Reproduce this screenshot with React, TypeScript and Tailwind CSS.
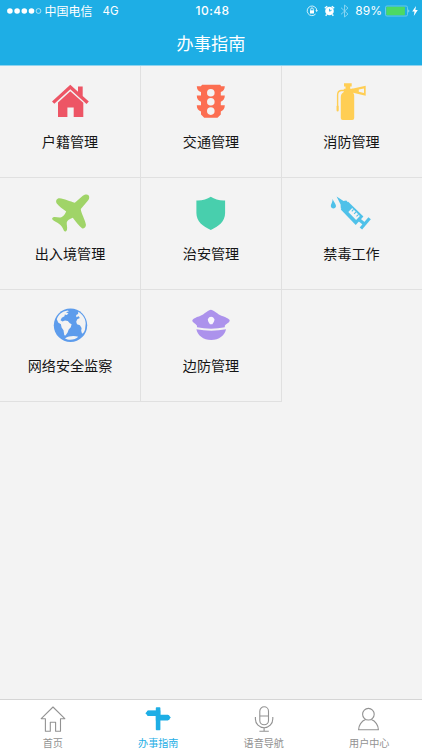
import type { ReactNode } from "react";

type Service = { name: string; icon: ReactNode };
type Tab = { name: string; icon: ReactNode; active?: boolean };

const services: Service[] = [
  {
    name: "户籍管理",
    icon: (
      <g fill="#ed5565">
        <path d="M20.3 3.8 28 10.8V5.5h4.7v9.6l6.1 5.5-2.3 2.3L20.3 8.3 4.3 22.8 2 20.5Z" />
        <path d="M20.3 10.2 33.3 21.8V36H23.7v-9.5h-6.3V36H8V21.6Z" />
      </g>
    ),
  },
  {
    name: "交通管理",
    icon: (
      <>
        <path
          fill="#fc6e51"
          d="M11 3.7H29.2L30.2 5.2H33.8C33.8 8.3 32.3 10 29.8 11V14.5H33.8C33.8 17.8 32.3 19.8 29.8 20.8V24.2H33.8C33.8 27.5 32.3 29.5 29.8 30.4V33.5L26.5 36.7H13.2L10 33.5V30.4C7.2 29.5 5.8 27.5 5.8 24.2H10V20.8C7.2 19.8 5.8 17.8 5.8 14.5H10V11C7.2 10 5.8 8.3 5.8 5.2H10Z"
        />
        <g fill="#f3f3f3">
          <circle cx="19.8" cy="11.7" r="3.8" />
          <circle cx="19.8" cy="20.8" r="3.8" />
          <circle cx="19.8" cy="30.1" r="3.8" />
        </g>
      </>
    ),
  },
  {
    name: "消防管理",
    icon: (
      <>
        <g fill="#ffce54">
          <path d="M12 2.3h7.7v3.2h-1.5v2.2h3v4.3c1 1 1 2 1 4v21q0 2-2 2h-9.4q-2 0-2-2V16q0-3.5 3-5V7.7h1.7V5.5H12Z" />
          <path d="M20 7.8 33.7 4.8v10L20 11.5Z" />
        </g>
        <path d="M26.8 8.6 32 7.4v4.6L26.8 10.8Z" fill="#f3f3f3" />
        <path d="M13 9.5H9Q5.6 10 5.6 14V29.5" fill="none" stroke="#ffce54" strokeWidth="1.4" />
        <path d="M5.6 25.5v4" stroke="#ffce54" strokeWidth="2" strokeLinecap="round" />
      </>
    ),
  },
  {
    name: "出入境管理",
    icon: (
      <path
        fill="#a0d468"
        d="M32.8 2.8C35 1.2 37.5 1.2 38.5 2.2C39.8 3.6 39.3 6.2 37.8 7.8L30.8 16C31 20 35.2 27 35.9 31.6C36.2 34.5 33.8 36.2 32 35.2C29.3 33.4 25.8 28.5 22.8 24.8C19.5 26 17.2 27.5 16.8 29.3C16.4 31.2 17.6 34.5 17 36.7C16.4 38.9 14.7 39 13.8 37.5C12.8 34.8 11.3 32.6 9.2 31C7 29.2 4 28.5 2.6 26.8C1.4 25.3 2.6 23.8 4.7 23.9C6.8 24 9.3 24.7 11.3 24.2C13.7 23.6 15 21 16.2 18.6C12.8 16 8.4 12.8 6.6 10.2C5.3 7.8 6.9 5.2 9.5 5.3C14 5.7 20.5 8.7 24.8 9.7Z"
      />
    ),
  },
  {
    name: "治安管理",
    icon: (
      <path
        fill="#48cfad"
        d="M19.8 3.7C16 6.3 11 7.8 5.4 7.5V20C5.4 28.5 12 33.5 19.8 37C27.5 33.5 34.1 28.5 34.1 20V7.5C28.6 7.8 23.6 6.3 19.8 3.7Z"
      />
    ),
  },
  {
    name: "禁毒工作",
    icon: (
      <>
        <path d="M.6 6C.8 9-1.2 11-1.2 13c0 3.2 5.2 3.2 5.2 0C3.8 10.5 1.4 8.5.6 6Z" fill="#4fc1e9" />
        <path d="M4.6 3.6 11.5 7.9 14.3 7.6 17.2 10.8 11.2 17.5 8.8 15.2 8.6 11.5Z" fill="#4fc1e9" />
        <path d="m16.2 8.7 15.2 14.8-7.7 8.4-14.9-15.3Z" fill="#4fc1e9" />
        <path d="m20.2 15.1 7.7 7.8-3.8 4-7.8-7.9Z" fill="#f3f3f3" />
        <g stroke="#4fc1e9" fill="none">
          <path d="m21.6 16.4-1.8 2M24.1 18.9l-2 2M26.6 21.4l-2.1 2" strokeWidth="1.1" />
          <path d="m27.5 27 5.6 4.6" strokeWidth="3.2" />
          <path d="m37.6 25.2-8.7 10.3" strokeWidth="3.2" />
        </g>
      </>
    ),
  },
  {
    name: "网络安全监察",
    icon: (
      <>
        <circle cx="20.5" cy="20.3" r="16.7" fill="#5d9cec" />
        <g fill="#f3f3f3">
          <path d="M6.8 14.2C8 10 12 6.2 17.7 5.5L19 6.2 16 7.3 18.5 8.6 16.7 10 14.8 9.4 14.5 11.3 11.8 12.7 10.5 15.2 12.5 16.4 15 15.4 17.8 16 19.8 18.2 21.6 19.2 20.8 22.3 18.7 24.5 17.6 27.6 15.5 30.4 14.3 30.2 13.5 25.2 11.6 22.4 10.9 19.3 8.2 17.5Z" />
          <path d="M28.2 6.8C32.7 9.5 35.5 13.3 35.7 18.5L35 24.8C34.2 27.5 32.6 29 31.9 28.3L31.2 25.8 31.6 22.9 29.9 20.2 27 19.2 26.2 16.7 27.3 14.3 29.8 13.1 28.7 11.3 26.3 12.2 26.2 10.1 28.1 9Z" />
          <path d="M15 33.5C18.5 30.8 24.5 30.5 28.2 31.8C25.8 34.6 19 35.8 15 33.5Z" />
        </g>
      </>
    ),
  },
  {
    name: "边防管理",
    icon: (
      <>
        <g fill="#ac92ec">
          <path d="M19.9 4.7C22 4.7 27 9.5 31 10.9C33.5 11.8 38.7 13.5 38.7 15.5C38.7 17.5 34.5 19.2 33.8 20.8V22.3C25 24.1 15 24.1 6 22.3V20.8C5.3 19 1.3 17.5 1.3 15.5C1.3 13.6 6.5 11.8 9 10.9C13 9.5 17.7 4.7 19.9 4.7Z" />
          <path d="M5.4 24.3C15 26.2 25.5 26.2 35 24.3C34.2 30 28 35.1 20.2 35.1S6.1 30 5.4 24.3Z" />
        </g>
        <path d="M18.2 12.2Q20.1 11.4 22 12.2L23.5 14.2C23.4 16.9 22 17.8 21.4 19.2H18.9C18.3 17.8 16.9 16.9 16.8 14.2Z" fill="#f8f6fd" />
      </>
    ),
  },
];

const tabs: Tab[] = [
  {
    name: "首页",
    icon: <path d="M15 2 3.2 13.7H7.4V26.2h4.9V17.2h5.3v9h4.9V13.7h4.3Z" />,
  },
  {
    name: "办事指南",
    active: true,
    icon: (
      <g fill="currentColor" stroke="none">
        <rect x="12.8" y="2.2" width="4.6" height="23" rx=".8" />
        <path d="M5 5.4h12.3v5.6H5L2.4 8.2Z" />
        <path d="M12.8 9.7h12.2l2.8 2.8-2.8 2.9H12.8Z" />
        <path d="M4.5 6.4H14v3.6H4.5ZM15 10.7h10.8v3.7H15Z" stroke="currentColor" strokeLinejoin="round" />
      </g>
    ),
  },
  {
    name: "语音导航",
    icon: (
      <>
        <rect x="10.8" y="1.8" width="8.7" height="18" rx="4.35" />
        <path d="M10.8 11h8.7M6.4 12v2a8.7 8.7 0 0 0 17.4 0v-2M15.1 22.9v3.3M10.4 26.2h9.4" />
      </>
    ),
  },
  {
    name: "用户中心",
    icon: (
      <>
        <circle cx="14.4" cy="9.2" r="5.8" />
        <path d="M11.6 14.6C7.5 16 4.6 20.5 4.6 24.7H24.4C24.4 20.5 21.5 16 17.3 14.6" />
      </>
    ),
  },
];

function StatusBar() {
  return (
    <div className="flex h-[22px] items-center pl-[7px] pr-1 text-[12px] leading-[22px]">
      <div className="flex flex-1 items-center">
        <svg width="35" height="8" viewBox="0 0 35 8" fill="white">
          <circle cx="2.9" cy="4" r="2.8" />
          <circle cx="10.1" cy="4" r="2.8" />
          <circle cx="17.3" cy="4" r="2.8" />
          <circle cx="24.5" cy="4" r="2.8" />
          <circle cx="31.5" cy="4" r="2.4" fill="none" stroke="white" strokeWidth=".6" />
        </svg>
        <span className="ml-[2.5px]">中国电信</span>
        <span className="ml-[10px] font-['Inter','Noto_Sans_CJK_SC',sans-serif] text-[11.5px]">4G</span>
      </div>
      <span className="font-['Inter',sans-serif] text-[12px] font-medium tracking-[0.4px]">10:48</span>
      <div className="flex flex-1 items-center justify-end">
        <svg className="mr-[6px]" width="12" height="12" viewBox="0 0 12 12" fill="none" stroke="white" strokeWidth=".8">
          <path d="M9.6 9A4.8 4.8 0 1 1 10.8 5.6" />
          <path d="M9.4 5.3h2.5l-1.2 1.8Z" fill="white" stroke="none" />
          <rect x="4" y="5.3" width="4" height="3.2" fill="white" stroke="none" />
          <path d="M4.7 5.5V4.2a1.3 1.3 0 0 1 2.6 0v1.3" />
        </svg>
        <svg className="mr-[5px]" width="11" height="12" viewBox="0 0 11 12" fill="none" stroke="white">
          <circle cx="5.5" cy="6" r="4.3" fill="white" stroke="none" />
          <path d="m.8 3.2 2.4-1.9M10.2 3.2 7.8 1.3M2.7 9.4l-1 1.3M8.3 9.4l1 1.3" strokeWidth="1.4" />
          <path d="M5.6 3.8v2.4l2-1" stroke="#1eaee5" strokeWidth=".9" />
        </svg>
        <svg className="mr-[6px]" width="9" height="14" viewBox="0 0 9 14" fill="none" stroke="#8ed7f2" strokeWidth=".9">
          <path d="m1 3.7 7 6.4L4.5 13V1L8 4 1 10.3" />
        </svg>
        <span className="font-['Inter',sans-serif] text-[12px]">89%</span>
        <svg className="ml-[3px]" width="26" height="12" viewBox="0 0 26 12">
          <rect x=".5" y="1" width="22" height="10" rx="1.4" fill="none" stroke="#8bd6ec" strokeWidth=".7" />
          <rect x="1.3" y="1.8" width="18.6" height="8.4" rx=".7" fill="#4cd964" />
          <path d="M23.5 4.2q1.8 1.8 0 3.6Z" fill="#c7edf9" />
        </svg>
        <svg className="ml-px" width="6" height="10" viewBox="0 0 6 10" fill="white">
          <path d="M4 0 .2 5.6h2.3L1.8 10 5.8 4H3.4Z" />
        </svg>
      </div>
    </div>
  );
}

export default function App() {
  return (
    <div className="flex h-[750px] w-[422px] flex-col overflow-hidden bg-[#f3f3f3] font-['Noto_Sans_CJK_SC',sans-serif]">
      <header className="h-[66px] border-b border-[#8fd3ee] bg-[#1eaee5] text-white">
        <StatusBar />
        <h1 className="text-center text-[17.2px] leading-[41px]">办事指南</h1>
      </header>

      <main className="grid flex-1 auto-rows-[112px] grid-cols-[141px_141px_140px] content-start">
        {services.map((s, i) => (
          <div
            key={s.name}
            className={`flex flex-col items-center border-b border-[#e0e0e0] pt-[15px] ${i % 3 === 2 ? "pr-px" : "border-r"}`}
          >
            <svg className="overflow-visible" width="40" height="40" viewBox="0 0 40 40">
              {s.icon}
            </svg>
            <span className="mt-[10px] text-[14.1px] leading-5 text-[#151515]">{s.name}</span>
          </div>
        ))}
      </main>

      <nav className="grid h-[51px] grid-cols-4 border-t border-[#d5d5d5] bg-white">
        {tabs.map((t) => (
          <div
            key={t.name}
            className={`flex flex-col items-center pt-[5px] ${t.active ? "text-[#1eaee5]" : "text-[#929292]"}`}
          >
            <svg width="30" height="28" viewBox="0 0 30 28" fill="none" stroke="currentColor" strokeWidth="1.1" strokeLinejoin="round">
              {t.icon}
            </svg>
            <span className="mt-[2px] text-[10.1px] leading-[15px]">{t.name}</span>
          </div>
        ))}
      </nav>
    </div>
  );
}
